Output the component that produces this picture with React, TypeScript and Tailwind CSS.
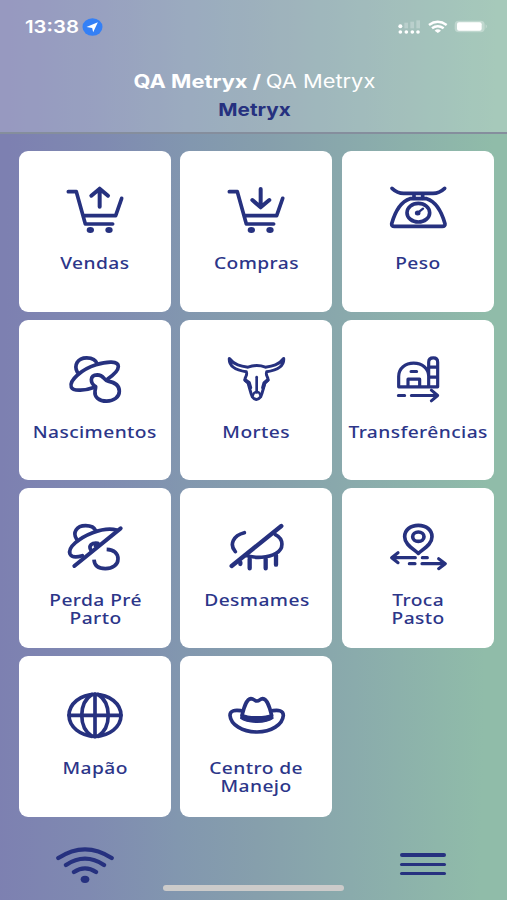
import type { ReactNode } from 'react'

const INK = '#26317f'

function Icon({ box, children }: { box: string; children: ReactNode }) {
  return (
    <svg
      viewBox={box}
      className="h-[54px] w-[60px] shrink-0"
      fill="none"
      stroke={INK}
      strokeWidth={11}
      strokeLinecap="round"
      strokeLinejoin="round"
    >
      {children}
    </svg>
  )
}

function Cart() {
  return (
    <>
      <path d="M161 140H185L212 237H294M207 212H303L321 160" />
      <ellipse cx="227" cy="255" rx="11" ry="9" fill={INK} stroke="none" />
      <ellipse cx="283" cy="255" rx="11" ry="9" fill={INK} stroke="none" />
    </>
  )
}

const tiles: { lines: string[]; icon: ReactNode }[] = [
  {
    lines: ['Vendas'],
    icon: (
      <Icon box="151 114 180 162">
        <Cart />
        <path d="M255 185V131M230 152L255 131L280 152" strokeWidth={12} />
      </Icon>
    ),
  },
  {
    lines: ['Compras'],
    icon: (
      <Icon box="151 114 180 162">
        <Cart />
        <path d="M255 132V186M230 165L255 187L281 165" strokeWidth={12} />
      </Icon>
    ),
  },
  {
    lines: ['Peso'],
    icon: (
      <Icon box="150 114 180 162">
        <path d="M162 130Q178 145 197 145H285Q304 145 320 130" />
        <path d="M228 151V160M254 151V160" />
        <path d="M161 236C170 204 185 171 216 161H266C297 171 312 204 321 236Q322 244 313 244H169Q160 244 161 236Z" />
        <ellipse cx="241" cy="203" rx="34" ry="28" />
        <ellipse cx="239" cy="204" rx="6" ry="5" fill={INK} strokeWidth={5} />
        <path d="M240 203L255 191" strokeWidth={7} />
      </Icon>
    ),
  },
  {
    lines: ['Nascimentos'],
    icon: (
      <Icon box="151 109.5 180 162">
        <path d="M188 170C177 150 188 127 216 127C233 127 244 134 248 146" />
        <path d="M240 215C212 225 176 229 170 215C162 194 203 161 244 148C278 137 311 136 311 153C311 167 296 179 278 191" />
        <path d="M243 213C226 203 224 179 248 178C268 178 267 195 280 197C302 201 314 211 314 227C314 245 297 257 276 257C252 257 239 244 241 227C242 221 243 217 243 213Z" />
      </Icon>
    ),
  },
  {
    lines: ['Mortes'],
    icon: (
      <Icon box="145 109.5 180 162">
        <path
          d="M155 129C153 151 174 164 206 169C210 182 201 183 202 193L211 202C216 218 218 231 224 244Q236 260 249 244C255 231 257 218 262 202L271 193C272 183 263 182 267 169C299 164 320 151 318 129C304 148 284 152 263 155C247 149 228 149 211 155C190 152 169 148 155 129Z"
          strokeWidth={9}
        />
        <path d="M237 185V231" strokeWidth={8} />
        <path d="M226 239Q229 229 237 229Q246 229 248 239" strokeWidth={7} />
        <path d="M203 194L214 202L218 216M270 194L260 202L256 216" strokeWidth={11} />
      </Icon>
    ),
  },
  {
    lines: ['Transferências'],
    icon: (
      <Icon box="150 109.5 180 162">
        <path
          d="M272 214H182V183C182 158 202 143 227 143C252 143 272 158 272 183M272 214V140Q272 127 286 127Q299 127 299 140V214H272M274 155H297M274 185H297M210 213V191H245V213"
          strokeWidth={9.5}
        />
        <path d="M219 168H236M181 240H200M220 240H298M280 224L299 240L280 256" strokeWidth={9} />
      </Icon>
    ),
  },
  {
    lines: ['Perda Pré', 'Parto'],
    icon: (
      <Icon box="151 105 180 162">
        <path d="M186 163C173 143 185 122 213 122C229 122 240 129 244 138" />
        <path d="M203 212C187 217 171 217 166 207C158 187 195 158 234 143C261 133 288 130 306 135" />
        <path d="M179 243L318 130" strokeWidth={12} />
        <path d="M229 196C220 182 232 172 250 175" />
        <path d="M240 183L250 177" strokeWidth={7} />
        <path d="M276 193C300 194 310 207 310 222C310 240 293 251 272 251C252 251 239 242 238 224" strokeLinecap="butt" />
      </Icon>
    ),
  },
  {
    lines: ['Desmames'],
    icon: (
      <Icon box="634 105 180 162">
        <path d="M651 243L800 123" strokeWidth={13} />
        <path d="M689 143C656 151 643 178 662 200M782 149C808 162 808 192 784 205C761 218 724 221 691 211" />
        <path d="M705 222V250M753 222V250M784 211V239M677 232V237" strokeWidth={13} />
      </Icon>
    ),
  },
  {
    lines: ['Troca', 'Pasto'],
    icon: (
      <Icon box="150 105 180 162">
        <path d="M241 205C224 190 200 178 200 155C200 135 217 121 241 121C265 121 282 135 282 155C282 178 258 190 241 205Z" />
        <ellipse cx="241" cy="155" rx="17" ry="14" />
        <path d="M232 218H162M180 203L161 218L180 233M253 218H268M214 236H231M252 236H321M302 221L322 236L302 251" strokeWidth={9.5} />
      </Icon>
    ),
  },
  {
    lines: ['Mapão'],
    icon: (
      <Icon box="151 100 180 162">
        <ellipse cx="241" cy="182" rx="78" ry="63" />
        <path d="M241 118V246M163 182H319" />
        <path d="M232 119C191 145 191 219 232 245M250 119C291 145 291 219 250 245" />
      </Icon>
    ),
  },
  {
    lines: ['Centro de', 'Manejo'],
    icon: (
      <Icon box="634 100 180 162">
        <path d="M682 182C688 158 695 133 709 132C718 132 719 139 727 139C735 139 736 132 744 132C758 133 765 158 771 182" />
        <path d="M678 168C661 165 646 168 646 182C648 210 683 232 727 232C770 232 804 210 806 182C806 168 791 165 775 168" />
        <path
          d="M681 178C699 189 754 189 772 178L775 191C755 207 698 207 678 191Z"
          fill={INK}
          strokeWidth={4}
        />
      </Icon>
    ),
  },
]

function StatusBar() {
  return (
    <div className="flex h-[54px] items-center pr-[19px] pl-[25px]">
      <span className="w-[57px] text-[17.500px] leading-none font-semibold whitespace-nowrap text-white">
        <span className="inline-block origin-left scale-x-[1.16]">13:38</span>
      </span>
      <svg viewBox="0 0 62 54" className="h-[18px] w-[21px]">
        <ellipse cx="31" cy="27" rx="30" ry="26" fill="#3480f6" />
        <path d="M47 13L13 27L30 30L33 43Z" fill="#fff" />
      </svg>
      <svg viewBox="0 0 270 42" className="ml-auto h-[14px] w-[90px]" fill="#fff">
        <g opacity="0.25">
          <rect x="19" y="8" width="11" height="17" />
          <rect x="37" y="5" width="11" height="20" />
          <rect x="55" y="1" width="11" height="24" />
        </g>
        <circle cx="7" cy="19" r="6" />
        <circle cx="7" cy="36" r="5.5" />
        <circle cx="25" cy="36" r="5.5" />
        <circle cx="43" cy="36" r="5.5" />
        <circle cx="60" cy="36" r="5.5" />
        <g fill="none" stroke="#fff" strokeWidth="7.5">
          <path d="M93 15Q119 -4 146 15" />
          <path d="M102 25Q119 12 137 25" />
        </g>
        <path d="M110 32Q119 24 129 32L119.500 39Z" />
        <rect x="170" y="2" width="90" height="35" rx="12" fillOpacity="0.3" />
        <path d="M263 13Q270 19 263 26Z" fillOpacity="0.35" />
        <rect x="177" y="7" width="74" height="25" rx="6" />
      </svg>
    </div>
  )
}

export default function App() {
  return (
    <div className="flex h-screen w-full flex-col overflow-hidden bg-[linear-gradient(91deg,#7d80b1_2%,#7f8ab1_20%,#8297af_37%,#869fac_52%,#8aabac_70%,#90bca9_95%)] font-['Inter','Liberation_Sans',sans-serif]">
      <header className="h-[134px] shrink-0 border-b-2 border-[#858e9d] bg-white/20">
        <StatusBar />
        <div className="flex h-[54px] items-center justify-center pl-px text-[18.500px] leading-none whitespace-nowrap text-white">
          <div className="scale-x-[1.18]">
            <span className="font-bold">QA Metryx /</span>
            <span className="ml-1">QA Metryx</span>
          </div>
        </div>
        <div className="-mt-[7px] pl-px text-center text-[18px] leading-[18px] font-bold text-[#26317f]">
          <span className="inline-block scale-x-[1.15]">Metryx</span>
        </div>
      </header>

      <main className="grid grid-cols-[152px_152px_152px] gap-x-[9.300px] gap-y-[8px] pt-[17.200px] pl-[19.200px]">
        {tiles.map(({ lines, icon }) => (
          <button
            key={lines[0]}
            className="flex h-[160.400px] flex-col items-center rounded-[9px] bg-white pt-[32px]"
          >
            {icon}
            <span className="mt-[18px] block scale-x-[1.2] font-['Noto_Sans','Open_Sans',sans-serif] text-[16px] leading-[17.800px] font-medium tracking-[0.35px] whitespace-nowrap text-[#2c3689]">
              {lines.map((line) => (
                <span key={line} className="block">
                  {line}
                </span>
              ))}
            </span>
          </button>
        ))}
      </main>

      <footer className="flex flex-1 items-start justify-between pr-[61px] pl-[55px]">
        <svg
          viewBox="165 75 180 120"
          className="mt-[28px] h-[40px] w-[60px]"
          fill="none"
          stroke={INK}
          strokeWidth="13"
          strokeLinecap="round"
        >
          <path d="M175 114Q255 62 335 114M198 135Q255 97 312 135M222 156Q255 134 288 156" />
          <ellipse cx="255" cy="178" rx="13" ry="11" fill={INK} stroke="none" />
        </svg>
        <div className="mt-[68px] mr-[8px] h-[6px] w-[181px] rounded-full bg-[#cccbca]" />
        <div className="mt-[36.500px] flex w-[46px] flex-col gap-[6px]">
          <div className="h-[3.400px] rounded-full bg-[#26317f]" />
          <div className="h-[3.400px] rounded-full bg-[#26317f]" />
          <div className="h-[3.400px] rounded-full bg-[#26317f]" />
        </div>
      </footer>
    </div>
  )
}
